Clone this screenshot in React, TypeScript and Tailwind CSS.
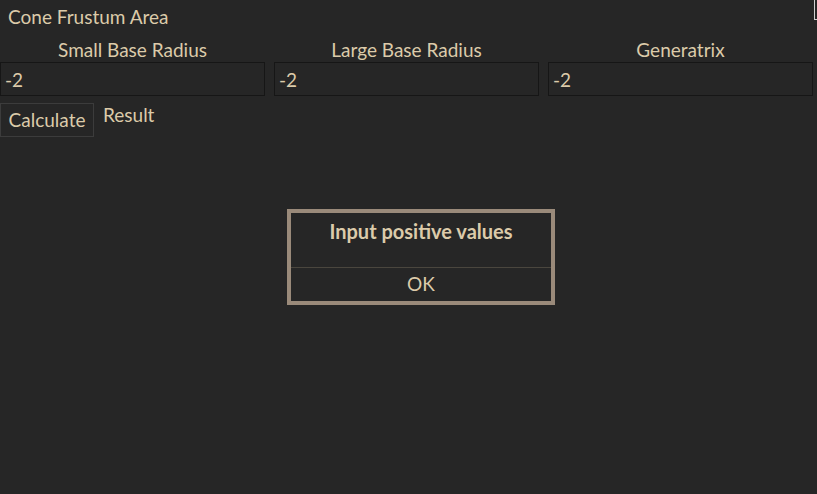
export default function App() {
  const cols = ["Small Base Radius", "Large Base Radius", "Generatrix"];
  return (
    <div className="relative w-[817px] h-[494px] bg-[#262626] text-[#dccbaa] overflow-hidden" style={{ fontFamily: "Lato, 'Noto Sans', sans-serif" }}>
      <div className="absolute right-0 top-0 w-[3px] h-[20px] border-l border-[#cfcfcf] border-b" />
      <div className="pl-[8px] pt-[5px] text-[19px] leading-[24px]">Cone Frustum Area</div>
      <div className="flex gap-[9px] mt-[10px] pr-[4px]">
        {cols.map((c) => (
          <div key={c} className="flex-1 flex flex-col">
            <div className="text-center text-[19px] leading-[22px]">{c}</div>
            <input
              defaultValue="-2"
              className="mt-[1px] h-[34px] w-full bg-[#262626] border border-[#161616] px-[4px] text-[19px] text-[#dccbaa] outline-none"
              style={{ fontFamily: "Lato, sans-serif" }}
            />
          </div>
        ))}
      </div>
      <div className="flex items-start gap-[9px] mt-[7px]">
        <button className="h-[34px] w-[94px] border border-[#3c3c3c] text-[19px] pt-0 leading-[24px]">Calculate</button>
        <span className="text-[19px] leading-[24px]">Result</span>
      </div>
      <div className="absolute left-[287px] top-[209px] w-[268px] h-[96px] border-[4px] border-[#9a8a7a] bg-[#262626] flex flex-col">
        <div className="flex-1 flex items-start justify-center pt-[6px] font-bold text-[20px] leading-[24px]">Input positive values</div>
        <div className="h-[34px] border-t border-[#4a463e] flex items-center justify-center text-[19px]">OK</div>
      </div>
    </div>
  );
}
